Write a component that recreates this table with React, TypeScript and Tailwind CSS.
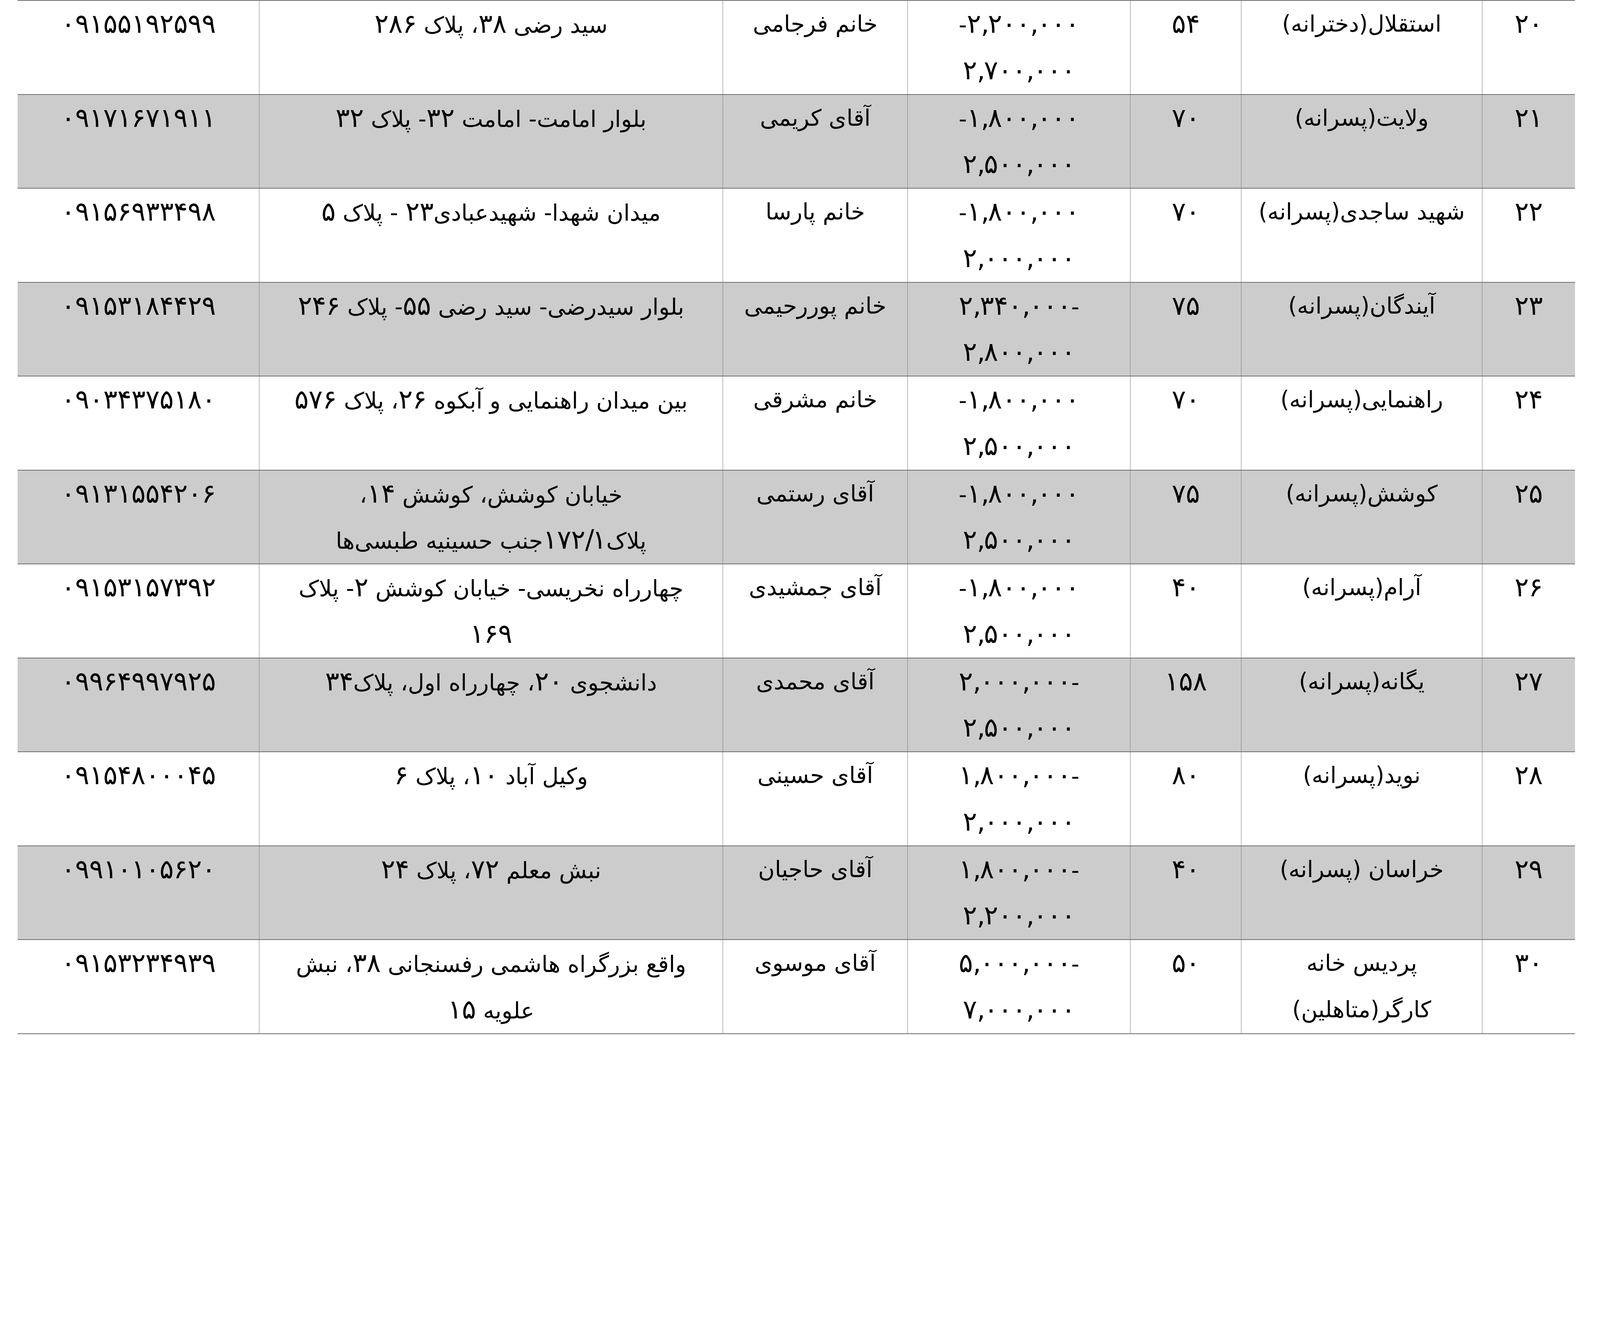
import React from "react";

type Row = {
  num: string;
  dorm: string[];
  cap: string;
  price: string[];
  manager: string;
  address: string[];
  phone: string;
};

const rows: Row[] = [
  { num: "۲۰", dorm: ["استقلال(دخترانه)"], cap: "۵۴", price: ["۲,۲۰۰,۰۰۰-", "۲,۷۰۰,۰۰۰"], manager: "خانم فرجامی", address: ["سید رضی ۳۸، پلاک ۲۸۶"], phone: "۰۹۱۵۵۱۹۲۵۹۹" },
  { num: "۲۱", dorm: ["ولایت(پسرانه)"], cap: "۷۰", price: ["۱,۸۰۰,۰۰۰-", "۲,۵۰۰,۰۰۰"], manager: "آقای کریمی", address: ["بلوار امامت- امامت ۳۲- پلاک ۳۲"], phone: "۰۹۱۷۱۶۷۱۹۱۱" },
  { num: "۲۲", dorm: ["شهید ساجدی(پسرانه)"], cap: "۷۰", price: ["۱,۸۰۰,۰۰۰-", "۲,۰۰۰,۰۰۰"], manager: "خانم پارسا", address: ["میدان شهدا- شهیدعبادی۲۳ - پلاک ۵"], phone: "۰۹۱۵۶۹۳۳۴۹۸" },
  { num: "۲۳", dorm: ["آیندگان(پسرانه)"], cap: "۷۵", price: ["-۲,۳۴۰,۰۰۰", "۲,۸۰۰,۰۰۰"], manager: "خانم پوررحیمی", address: ["بلوار سیدرضی- سید رضی ۵۵- پلاک ۲۴۶"], phone: "۰۹۱۵۳۱۸۴۴۲۹" },
  { num: "۲۴", dorm: ["راهنمایی(پسرانه)"], cap: "۷۰", price: ["۱,۸۰۰,۰۰۰-", "۲,۵۰۰,۰۰۰"], manager: "خانم مشرقی", address: ["بین میدان راهنمایی و آبکوه ۲۶، پلاک ۵۷۶"], phone: "۰۹۰۳۴۳۷۵۱۸۰" },
  { num: "۲۵", dorm: ["کوشش(پسرانه)"], cap: "۷۵", price: ["۱,۸۰۰,۰۰۰-", "۲,۵۰۰,۰۰۰"], manager: "آقای رستمی", address: ["خیابان کوشش، کوشش ۱۴،", "پلاک۱۷۲/۱جنب حسینیه طبسی‌ها"], phone: "۰۹۱۳۱۵۵۴۲۰۶" },
  { num: "۲۶", dorm: ["آرام(پسرانه)"], cap: "۴۰", price: ["۱,۸۰۰,۰۰۰-", "۲,۵۰۰,۰۰۰"], manager: "آقای جمشیدی", address: ["چهارراه نخریسی- خیابان کوشش ۲- پلاک", "۱۶۹"], phone: "۰۹۱۵۳۱۵۷۳۹۲" },
  { num: "۲۷", dorm: ["یگانه(پسرانه)"], cap: "۱۵۸", price: ["-۲,۰۰۰,۰۰۰", "۲,۵۰۰,۰۰۰"], manager: "آقای محمدی", address: ["دانشجوی ۲۰، چهارراه اول، پلاک۳۴"], phone: "۰۹۹۶۴۹۹۷۹۲۵" },
  { num: "۲۸", dorm: ["نوید(پسرانه)"], cap: "۸۰", price: ["-۱,۸۰۰,۰۰۰", "۲,۰۰۰,۰۰۰"], manager: "آقای حسینی", address: ["وکیل آباد ۱۰، پلاک ۶"], phone: "۰۹۱۵۴۸۰۰۰۴۵" },
  { num: "۲۹", dorm: ["خراسان (پسرانه)"], cap: "۴۰", price: ["-۱,۸۰۰,۰۰۰", "۲,۲۰۰,۰۰۰"], manager: "آقای حاجیان", address: ["نبش معلم ۷۲، پلاک ۲۴"], phone: "۰۹۹۱۰۱۰۵۶۲۰" },
  { num: "۳۰", dorm: ["پردیس خانه", "کارگر(متاهلین)"], cap: "۵۰", price: ["-۵,۰۰۰,۰۰۰", "۷,۰۰۰,۰۰۰"], manager: "آقای موسوی", address: ["واقع بزرگراه هاشمی رفسنجانی ۳۸، نبش", "علویه ۱۵"], phone: "۰۹۱۵۳۲۳۴۹۳۹" },
];

// digit runs: evenly spaced figures like the source font, narrow separators
const Digits = ({ run }: { run: string }) => (
  <span dir="ltr" className="inline-block text-[68px]">
    {Array.from(run).map((ch, i) => (
      <span key={i} className={`inline-block text-center ${/[۰-۹]/.test(ch) ? "w-[36px]" : "w-[18px]"}`}>
        {ch}
      </span>
    ))}
  </span>
);

const Text = ({ value }: { value: string }) => {
  const parts = value.split(/([۰-۹][۰-۹,/]*)/);
  return (
    <>
      {parts.map((p, i) =>
        /^[۰-۹]/.test(p) ? <Digits key={i} run={p} /> : <React.Fragment key={i}>{p}</React.Fragment>
      )}
    </>
  );
};

const Cell = ({ lines, last }: { lines: string[]; last?: boolean }) => (
  <div className={`flex flex-col items-center text-center whitespace-nowrap ${last ? "" : "border-l border-[#7c7c7c]"}`}>
    {lines.map((line, i) => (
      <div key={i} dir="rtl" className="h-[118.9px]">
        <Text value={line} />
      </div>
    ))}
  </div>
);

export default function App() {
  return (
    <div className="w-[4096px] h-[2729px] bg-white pl-[45px] font-['DejaVu_Sans',sans-serif] text-[58px] leading-[118.9px] text-black">
      <div dir="rtl" className="w-[3986.6px] border-b-2 border-[#6e6e6e]">
        {rows.map((r, i) => (
          <div
            key={r.num}
            className={`grid grid-cols-[237.7px_616.8px_284.3px_569.4px_473.8px_1186.2px_618.4px] h-[240.5px] border-t-2 border-[#6e6e6e] ${
              i % 2 === 1 ? "bg-[#cccccc]" : "bg-white"
            }`}
          >
            <Cell lines={[r.num]} />
            <Cell lines={r.dorm} />
            <Cell lines={[r.cap]} />
            <Cell lines={r.price} />
            <Cell lines={[r.manager]} />
            <Cell lines={r.address} />
            <Cell lines={[r.phone]} last />
          </div>
        ))}
      </div>
    </div>
  );
}
